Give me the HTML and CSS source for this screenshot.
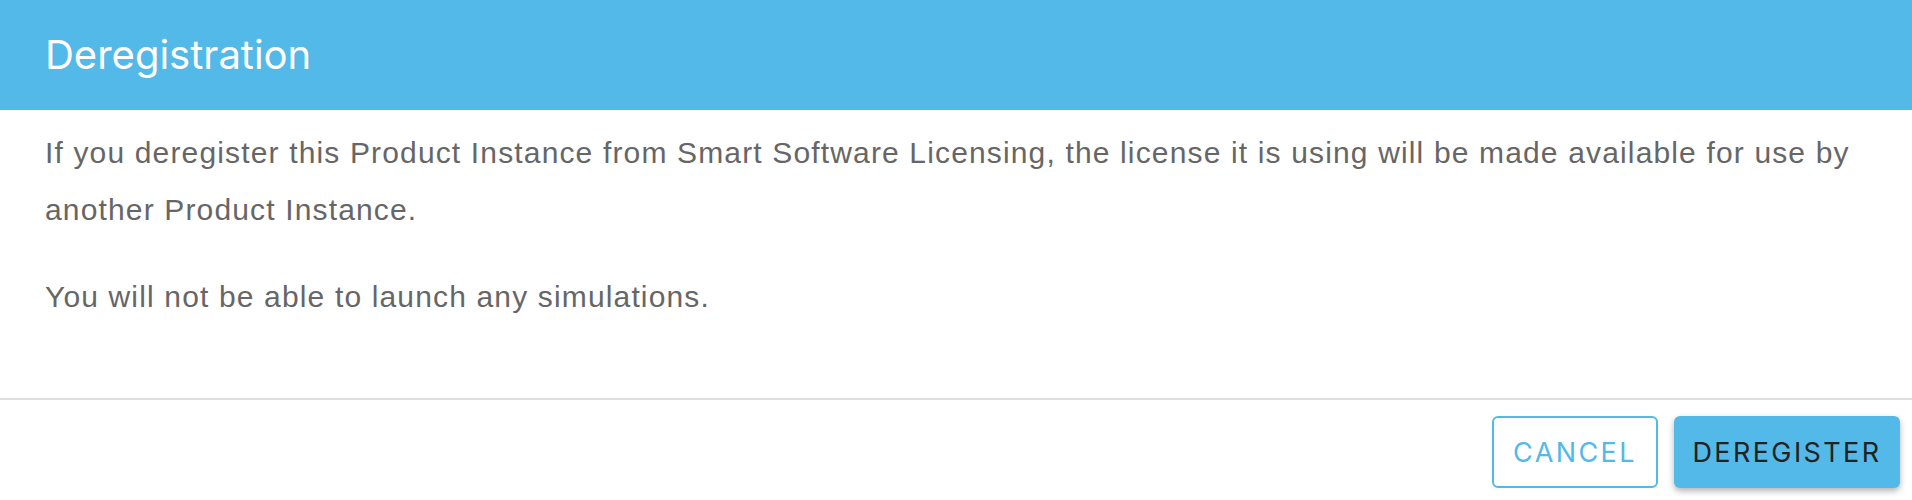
FILE: index.html
```html
<!DOCTYPE html>
<html>
<head>
<meta charset="utf-8">
<link rel="stylesheet" href="styles.css">
</head>
<body>
<div class="dialog">
  <div class="header"><h1 class="title">Deregistration</h1></div>
  <div class="content">
    <p class="para first">If you deregister this Product Instance from Smart Software Licensing, the license it is using will be made available for use by another Product Instance.</p>
    <p class="para">You will not be able to launch any simulations.</p>
  </div>
  <div class="actions">
    <button class="btn btn-outline">CANCEL</button>
    <button class="btn btn-primary">DEREGISTER</button>
  </div>
</div>
</body>
</html>
```
FILE: styles.css
```css
html, body {
  margin: 0;
  padding: 0;
  background: #ffffff;
}
.dialog {
  width: 1912px;
  height: 500px;
  display: flex;
  flex-direction: column;
}
.header {
  height: 110px;
  background: #52b9e8;
  display: flex;
  align-items: center;
  padding-left: 45px;
  box-sizing: border-box;
}
.title {
  margin: 0;
  font-family: Inter, "Liberation Sans", sans-serif;
  font-weight: 400;
  font-size: 40px;
  color: #ffffff;
  line-height: 1;
}
.content {
  padding: 14px 45px 0 45px;
  height: 290px;
  box-sizing: border-box;
  border-bottom: 2px solid #dedede;
}
.para {
  margin: 0;
  font-family: "Liberation Sans", Arial, sans-serif;
  font-size: 30px;
  letter-spacing: 1.15px;
  line-height: 57px;
  color: #666666;
}
.para.first {
  margin-bottom: 30px;
}
.actions {
  display: flex;
  justify-content: flex-end;
  gap: 16px;
  padding: 16px 12px 0 0;
}
.btn {
  font-family: Inter, "Liberation Sans", sans-serif;
  font-size: 27px;
  letter-spacing: 2.4px;
  border-radius: 6px;
  height: 72px;
  cursor: pointer;
  box-sizing: border-box;
}
.btn-outline {
  width: 166px;
  background: #ffffff;
  border: 2px solid #52b9e8;
  color: #52b9e8;
}
.btn-primary {
  width: 226px;
  background: #52b9e8;
  border: none;
  color: #222222;
  box-shadow: 0 3px 6px rgba(0, 0, 0, 0.3);
}
```
